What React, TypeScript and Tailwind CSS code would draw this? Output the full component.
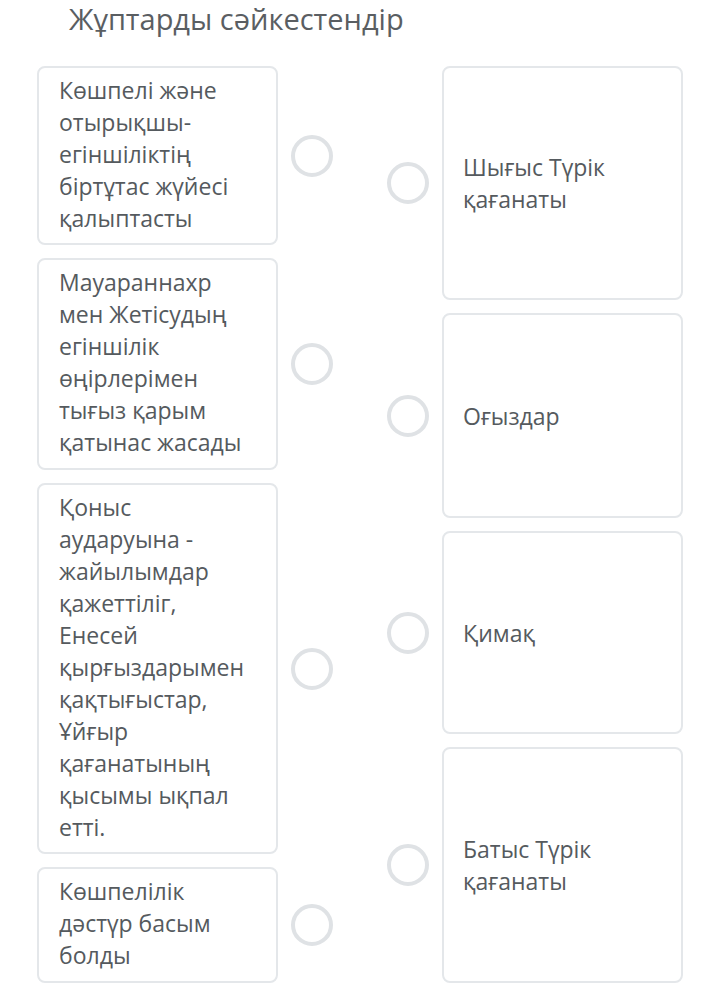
const leftItems = [
  { lines: ['Көшпелі және', 'отырықшы-', 'егіншіліктің', 'біртұтас жүйесі', 'қалыптасты'], h: 'h-[179px]' },
  { lines: ['Мауараннахр', 'мен Жетісудың', 'егіншілік', 'өңірлерімен', 'тығыз қарым', 'қатынас жасады'], h: 'h-[212px]' },
  {
    lines: ['Қоныс', 'аударуына -', 'жайылымдар', 'қажеттіліг,', 'Енесей', 'қырғыздарымен', 'қақтығыстар,', 'Ұйғыр', 'қағанатының', 'қысымы ықпал', 'етті.'],
    h: 'h-[371px]',
  },
  { lines: ['Көшпелілік', 'дәстүр басым', 'болды'], h: 'h-[116px]' },
];

const rightItems = [
  { lines: ['Шығыс Түрік', 'қағанаты'], h: 'h-[234px]' },
  { lines: ['Оғыздар'], h: 'h-[205px]' },
  { lines: ['Қимақ'], h: 'h-[203px]' },
  { lines: ['Батыс Түрік', 'қағанаты'], h: 'h-[236px]' },
];

function Circle() {
  return <div className="w-[42px] h-[42px] shrink-0 rounded-full border-[4px] border-[#dfe2e5] bg-white" />;
}

export default function App() {
  return (
    <div className="w-[712px] h-[1002px] bg-white overflow-hidden text-[#555a5e]" style={{ fontFamily: '"Open Sans", sans-serif' }}>
      <h1 className="pl-[69px] pt-[3px] text-[29px] leading-[32px] font-normal text-[#5a5e62]">Жұптарды сәйкестендір</h1>

      <div className="flex pl-[37px] pt-[31px]">
        <div className="flex flex-col gap-[13px]">
          {leftItems.map((item, i) => (
            <div key={i} className="flex items-center gap-[13px]">
              <div className={`w-[241px] ${item.h} rounded-[8px] border-2 border-[#e4e7ea] px-[20px] pt-[6px] pb-[8px] text-[23px] leading-[32px]`}>
                {item.lines.map((l, j) => (
                  <div key={j} className="whitespace-nowrap">{l}</div>
                ))}
              </div>
              <Circle />
            </div>
          ))}
        </div>

        <div className="flex flex-col gap-[13px] ml-[54px]">
          {rightItems.map((item, i) => (
            <div key={i} className="flex items-center gap-[13px]">
              <Circle />
              <div className={`w-[241px] ${item.h} rounded-[8px] border-2 border-[#e4e7ea] px-[19px] flex flex-col justify-center text-[23px] leading-[32px]`}>
                {item.lines.map((l, j) => (
                  <div key={j} className="whitespace-nowrap">{l}</div>
                ))}
              </div>
            </div>
          ))}
        </div>
      </div>
    </div>
  );
}
